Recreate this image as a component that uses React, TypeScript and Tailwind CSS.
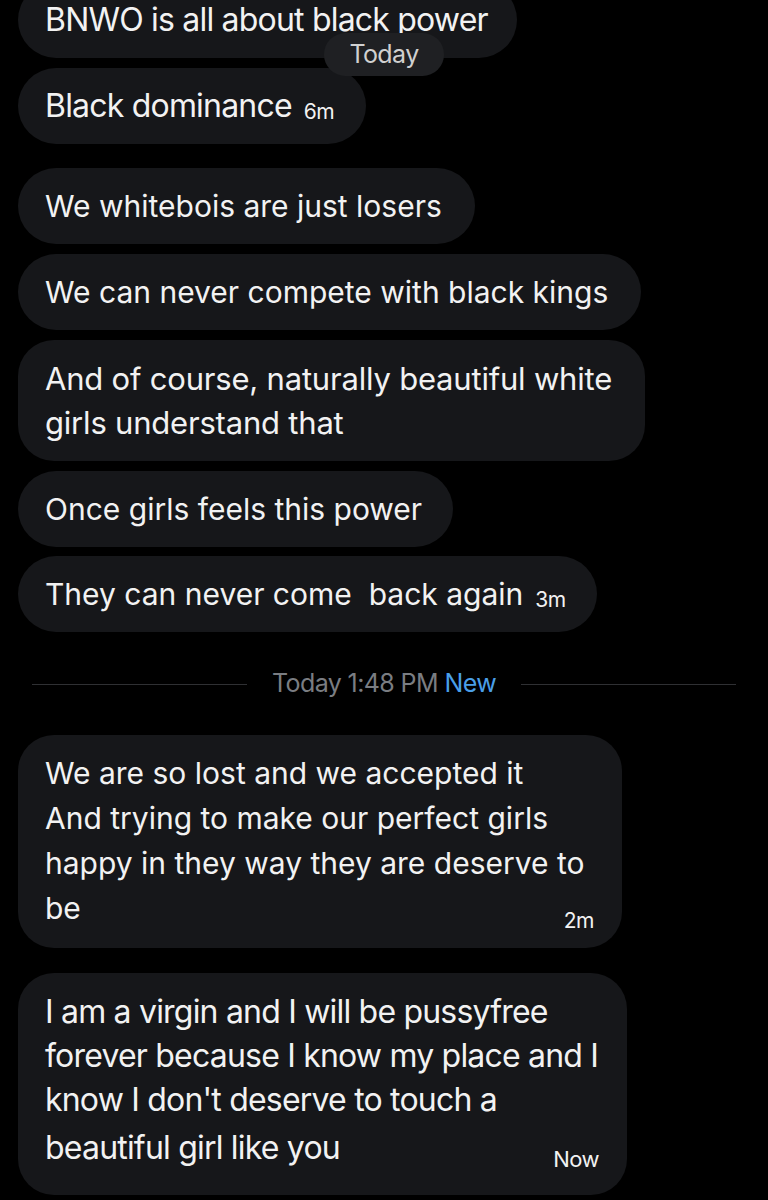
import React from "react";

const font = { fontFamily: "Inter, 'Open Sans', sans-serif" };

function Bubble({ w, children, cls = "" }: { w: string; children: React.ReactNode; cls?: string }) {
  return (
    <div className={`${w} bg-[#16171a] text-[#f2f2f2] leading-[44px] pl-[27px] pr-5 whitespace-nowrap shrink-0 ${cls}`}>
      {children}
    </div>
  );
}

export default function App() {
  return (
    <div className="w-[768px] h-[1200px] bg-black overflow-hidden relative" style={font}>
      <div className="absolute left-[324px] top-[33px] w-[120px] h-[43px] rounded-full bg-[#1f2023] text-[#d0d0d0] text-[25px] flex items-center justify-center z-10 tracking-[-0.6px]">
        Today
      </div>
      <div className="flex flex-col items-start pl-[18px] mt-[-18px]">
        <Bubble w="w-[499px]" cls="h-[76px] flex items-center rounded-full text-[32px] tracking-[-0.8px]">
          BNWO is all about black power
        </Bubble>
        <Bubble w="w-[348px]" cls="h-[76px] flex items-center rounded-full mt-[10px] text-[32px] tracking-[-0.8px]">
          <span>Black dominance</span>
          <span className="text-[21px] ml-[12px] relative top-[6px] tracking-[-0.5px]">6m</span>
        </Bubble>
        <Bubble w="w-[457px]" cls="h-[76px] flex items-center rounded-full mt-[24px] text-[30px]">
          We whitebois are just losers
        </Bubble>
        <Bubble w="w-[623px]" cls="h-[76px] flex items-center rounded-full mt-[10px] text-[30px]">
          We can never compete with black kings
        </Bubble>
        <Bubble w="w-[627px]" cls="h-[121px] flex flex-col justify-center rounded-[36px] mt-[10px] text-[31px] tracking-[-0.2px]">
          <div>And of course, naturally beautiful white</div>
          <div>girls understand that</div>
        </Bubble>
        <Bubble w="w-[435px]" cls="h-[76px] flex items-center rounded-full mt-[10px] text-[30px]">
          Once girls feels this power
        </Bubble>
        <Bubble w="w-[579px]" cls="h-[76px] flex items-center rounded-full mt-[9px] text-[30px]">
          <span className="whitespace-pre">They can never come  back again</span>
          <span className="text-[21px] ml-[12px] relative top-[6px] tracking-[-0.5px]">3m</span>
        </Bubble>
      </div>
      <div className="flex items-center mt-[38px] px-[32px] h-[28px]">
        <div className="flex-1 h-px bg-[#2f3033]" />
        <div className="px-[25px] text-[25px] tracking-[-0.6px] text-[#7a7d82]">
          Today 1:48 PM <span className="text-[#4a9fe8]">New</span>
        </div>
        <div className="flex-1 h-px bg-[#2f3033]" />
      </div>
      <div className="flex flex-col items-start pl-[18px] mt-[37px]">
        <div className="w-[604px] h-[213px] bg-[#16171a] text-[#f2f2f2] text-[30px] leading-[45px] pt-[16px] pl-[27px] pr-[28px] rounded-[36px] whitespace-nowrap">
          <div>We are so lost and we accepted it</div>
          <div>And trying to make our perfect girls</div>
          <div>happy in they way they are deserve to</div>
          <div className="flex items-baseline justify-between">
            <span>be</span>
            <span className="text-[21px] relative top-[9px] tracking-[-0.5px]">2m</span>
          </div>
        </div>
        <div className="w-[609px] h-[222px] mt-[25px] bg-[#16171a] text-[#f2f2f2] text-[32px] leading-[44px] pt-[17px] pl-[27px] pr-[28px] rounded-[36px] whitespace-nowrap tracking-[-0.8px]">
          <div>I am a virgin and I will be pussyfree</div>
          <div>forever because I know my place and I</div>
          <div>know I don't deserve to touch a</div>
          <div className="flex items-baseline justify-between mt-[4px]">
            <span>beautiful girl like you</span>
            <span className="text-[22px] relative top-[8px] tracking-[-0.5px]">Now</span>
          </div>
        </div>
      </div>
    </div>
  );
}
